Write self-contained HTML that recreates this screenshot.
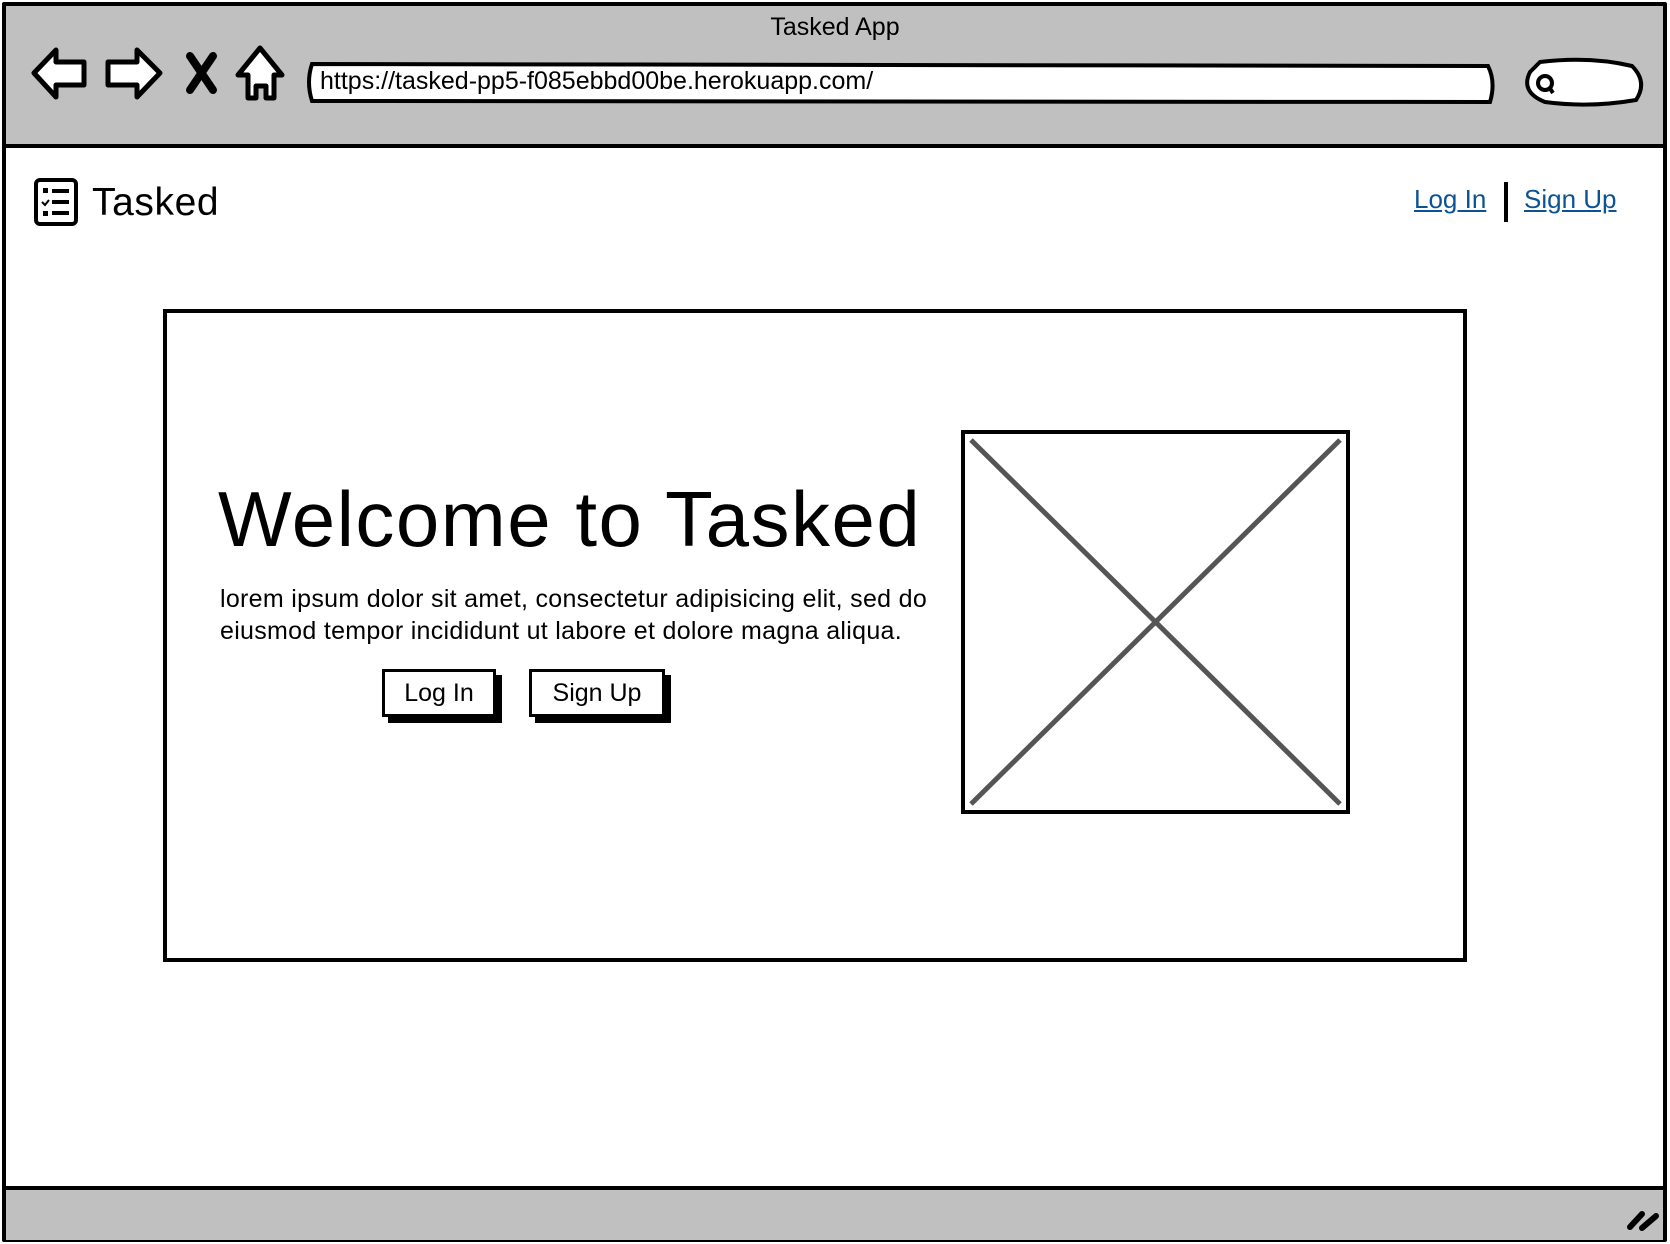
<!DOCTYPE html>
<html><head><meta charset="utf-8"><style>
*{margin:0;padding:0;box-sizing:border-box}
body{width:1670px;height:1244px;background:#fff;position:relative;overflow:hidden;font-family:"Liberation Sans",sans-serif;color:#000}
.abs{position:absolute}
</style></head><body>
<div class="abs" style="left:2px;top:2px;width:1665px;height:1240px;border:4px solid #000;border-radius:2px"></div>
<div class="abs" style="left:6px;top:6px;width:1657px;height:142px;background:#c0c0c0;border-bottom:4px solid #000"></div>
<div class="abs" style="left:0;top:13px;width:1670px;text-align:center;font-size:25px">Tasked App</div>
<svg class="abs" style="left:0;top:0" width="1670" height="146">
<path d="M34 73 L56 50 L56 62 L84 62 L84 85 L56 85 L56 97 Z" fill="#fff" stroke="#000" stroke-width="5" stroke-linejoin="round"/>
<path d="M160 73 L137 50 L137 62 L108 62 L108 85 L137 85 L137 97 Z" fill="#fff" stroke="#000" stroke-width="5" stroke-linejoin="round"/>
<path d="M190 56 L213 90 M213 56 L190 90" stroke="#000" stroke-width="8" stroke-linecap="round"/>
<path d="M260 48 L282 75 L274 75 L274 98 L266 98 L266 86 L256 86 L256 98 L248 98 L248 75 L238 75 Z" fill="#fff" stroke="#000" stroke-width="5" stroke-linejoin="round"/>
<path d="M312 64 L1488 66 Q1496 82 1490 102 L312 101 Q306 82 312 64 Z" fill="#fff" stroke="#000" stroke-width="4"/>
<path d="M1540 62 Q1590 56 1632 66 Q1648 82 1636 100 Q1590 108 1545 102 Q1520 92 1530 72 Z" fill="#fff" stroke="#000" stroke-width="4"/>
<circle cx="1545" cy="83" r="7" fill="none" stroke="#000" stroke-width="4"/>
<path d="M1549 87 L1553 93" stroke="#000" stroke-width="4"/>
</svg>
<div class="abs" style="left:320px;top:67px;font-size:25px">https://tasked-pp5-f085ebbd00be.herokuapp.com/</div>

<svg class="abs" style="left:33px;top:177px" width="46" height="50">
<rect x="3" y="3" width="40" height="44" rx="4" fill="none" stroke="#000" stroke-width="4"/>
<rect x="10" y="11" width="5" height="5" fill="#000"/><path d="M19 14 H36 M19 25 H36 M19 36 H36" stroke="#000" stroke-width="4"/>
<path d="M9 25 l3 3 l4 -5" stroke="#000" stroke-width="2" fill="none"/><rect x="10" y="34" width="5" height="5" fill="#000"/>
</svg>
<div class="abs" style="left:92px;top:181px;font-size:39px;letter-spacing:0.6px">Tasked</div>
<div class="abs" style="left:1414px;top:184px;font-size:26px;color:#0b5394;text-decoration:underline">Log In</div>
<div class="abs" style="left:1504px;top:182px;width:4px;height:40px;background:#000"></div>
<div class="abs" style="left:1524px;top:184px;font-size:26px;color:#0b5394;text-decoration:underline">Sign Up</div>

<div class="abs" style="left:163px;top:309px;width:1304px;height:653px;border:4px solid #000"></div>
<div class="abs" style="left:218px;top:474px;font-size:78px;white-space:nowrap;letter-spacing:1.5px">Welcome to Tasked</div>
<div class="abs" style="left:220px;top:583px;font-size:25px;line-height:32px;white-space:nowrap;letter-spacing:0.3px">lorem ipsum dolor sit amet, consectetur adipisicing elit, sed do<br>eiusmod tempor incididunt ut labore et dolore magna aliqua.</div>

<div class="abs" style="left:388px;top:675px;width:114px;height:48px;background:#000"></div>
<div class="abs" style="left:382px;top:669px;width:114px;height:48px;background:#fff;border:3px solid #000;font-size:25px;text-align:center;line-height:42px">Log In</div>
<div class="abs" style="left:535px;top:675px;width:136px;height:48px;background:#000"></div>
<div class="abs" style="left:529px;top:669px;width:136px;height:48px;background:#fff;border:3px solid #000;font-size:25px;text-align:center;line-height:42px">Sign Up</div>

<div class="abs" style="left:961px;top:430px;width:389px;height:384px;border:4px solid #000"></div>
<svg class="abs" style="left:961px;top:430px" width="389" height="384">
<path d="M10 10 L379 374 M379 10 L10 374" stroke="#555" stroke-width="5"/>
</svg>

<div class="abs" style="left:6px;top:1186px;width:1657px;height:54px;background:#c0c0c0;border-top:4px solid #000"></div>
<svg class="abs" style="left:1620px;top:1200px" width="45" height="35">
<path d="M10 27 L22 14 M22 28 L36 16" stroke="#000" stroke-width="6" stroke-linecap="round"/>
</svg>
</body></html>
